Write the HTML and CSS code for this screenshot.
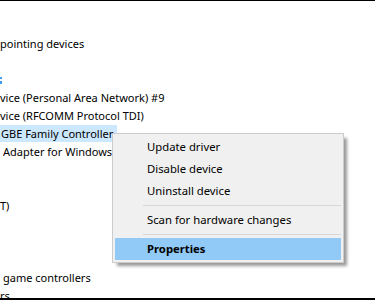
FILE: index.html
```html
<!DOCTYPE html>
<html lang="en">
<head>
  <meta charset="UTF-8">
  <meta name="viewport" content="width=device-width, initial-scale=1.0">
  <title>Device Manager</title>
  <link rel="stylesheet" href="styles.css">
</head>
<body>
  <div class="window">
    <ul class="tree">
      <li class="row">pointing devices</li>
      <li class="row"></li>
      <li class="row">
        <svg class="icon-cut" width="2" height="18" viewBox="0 0 2 18">
          <rect x="0" y="6" width="2" height="2" fill="#3f9ef0"/>
          <rect x="0" y="10" width="2" height="3" fill="#3f9ef0"/>
        </svg>
      </li>
      <li class="row">vice (Personal Area Network) #9</li>
      <li class="row">vice (RFCOMM Protocol TDI)</li>
      <li class="row"><span class="selected">GBE Family Controller</span></li>
      <li class="row indent">Adapter for Windows 8 (Kernel Debugger)</li>
      <li class="row"></li>
      <li class="row"></li>
      <li class="row">T)</li>
      <li class="row"></li>
      <li class="row"></li>
      <li class="row"></li>
      <li class="row indent">game controllers</li>
      <li class="row">rs</li>
    </ul>

    <!-- context menu over the tree -->
    <div class="context-menu">
      <div class="menu-item">Update driver</div>
      <div class="menu-item">Disable device</div>
      <div class="menu-item">Uninstall device</div>
      <div class="menu-sep"></div>
      <div class="menu-item">Scan for hardware changes</div>
      <div class="menu-sep"></div>
      <div class="menu-item active">Properties</div>
    </div>
  </div>
</body>
</html>
```

FILE: styles.css
```css
html, body {
  margin: 0;
  padding: 0;
  background-color: white;
  font-family: "Noto Sans", sans-serif;
  font-size: 11.3px;
  color: black;
}
.window {
  position: relative;
  height: 300px;
  box-sizing: border-box;
  border-top: 1px solid #000;
  border-bottom: 2px solid #000;
  overflow: hidden;
}
.tree {
  list-style: none;
  margin: 0;
  padding: 34px 0 0 0;
  font-size: 11px;
}
.row {
  height: 18px;
  line-height: 18px;
  white-space: nowrap;
}
.row.indent {
  padding-left: 3px;
}
.icon-cut {
  display: block;
}
.selected {
  display: inline-block;
  background-color: #cce8ff;
  padding: 0 4px 0 1px;
  height: 17px;
}
.context-menu {
  position: absolute;
  top: 132px;
  left: 112px;
  width: 232px;
  box-sizing: border-box;
  background-color: #f0f0f0;
  border: 1px solid #cccccc;
  padding: 2px;
  box-shadow: 4px 4px 3px -1px rgba(0, 0, 0, 0.4);
}
.menu-item {
  height: 22px;
  line-height: 22px;
  padding-left: 32px;
  white-space: nowrap;
}
.menu-item.active {
  background-color: #91c9f7;
  font-weight: bold;
}
.menu-sep {
  height: 1px;
  margin: 3px 0 3px 28px;
  background-color: #d7d7d7;
}
```
